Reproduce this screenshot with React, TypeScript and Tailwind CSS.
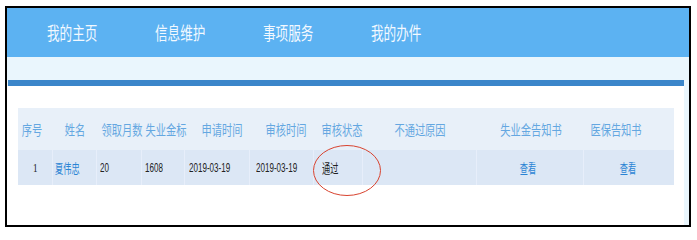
import React from "react";

const cjk = "font-['Noto_Sans_CJK_SC',sans-serif]";

function Sq({ children, className = "" }: { children: React.ReactNode; className?: string }) {
  return <span className={`inline-block whitespace-nowrap ${className}`}>{children}</span>;
}

const navItems = ["我的主页", "信息维护", "事项服务", "我的办件"];

const headers = [
  { text: "序号", cls: "pr-[7px]" },
  { text: "姓名", cls: "" },
  { text: "领取月数", cls: "pl-[4px]" },
  { text: "失业金标", cls: "pl-[4px]" },
  { text: "申请时间", cls: "pl-[8px]" },
  { text: "审核时间", cls: "pl-[8px]" },
  { text: "审核状态", cls: "pl-[6px]" },
  { text: "不通过原因", cls: "" },
  { text: "失业金告知书", cls: "" },
  { text: "医保告知书", cls: "pr-[27px]" },
];

const cell = "h-full flex items-center border-r border-[#e7eefa]";
const num = "origin-left font-['Liberation_Sans',sans-serif] scale-x-[0.62]";

export default function App() {
  return (
    <div className={`w-[697px] h-[232px] bg-white pt-[6px] pl-[5px] ${cjk}`}>
      <div className="w-[686px] h-[221px] border-2 border-black bg-[#eaf6fd] flex flex-col overflow-hidden">
        <nav className="h-[49px] shrink-0 bg-[#5cb2f2] flex items-center pl-[40px]">
          {navItems.map((item) => (
            <div key={item} className="w-[108px] shrink-0">
              <Sq className="text-[18px] text-[#f3f9ff] scale-x-[0.7] origin-left">{item}</Sq>
            </div>
          ))}
        </nav>
        <div className="h-[23px] shrink-0" />
        <div className="flex-1 flex flex-col pr-[5px]">
          <div className="h-[6px] ml-[1px] bg-[#3b86ca] shrink-0" />
          <div className="flex-1 bg-white pl-[11px] pt-[22px]">
            <div className="relative w-[656px]">
              <div className="grid grid-cols-[35px_44px_45px_43px_65px_64px_49px_114px_107px_90px] h-[42px] bg-[#e8f0f9] items-center text-[#64a7e1]">
                {headers.map((h) => (
                  <div key={h.text} className={`flex justify-center ${h.cls}`}>
                    <Sq className="text-[14px] scale-x-[0.73]">{h.text}</Sq>
                  </div>
                ))}
              </div>
              <div className="grid grid-cols-[35px_44px_45px_43px_65px_64px_49px_114px_107px_90px] h-[35px] bg-[#dce7f5] items-center text-[13px] text-[#222]">
                <div className={`${cell} justify-center pl-[1px]`}>
                  <Sq className="scale-x-[0.7] font-['Liberation_Serif',serif]">1</Sq>
                </div>
                <div className={`${cell} pl-[2px]`}>
                  <Sq className="scale-x-[0.63] origin-left text-[#2a84d4]">夏伟忠</Sq>
                </div>
                <div className={`${cell} pl-[3px]`}>
                  <Sq className={num}>20</Sq>
                </div>
                <div className={`${cell} pl-[3px]`}>
                  <Sq className={num}>1608</Sq>
                </div>
                <div className={`${cell} pl-[4px]`}>
                  <Sq className={num}>2019-03-19</Sq>
                </div>
                <div className={`${cell} pl-[6px]`}>
                  <Sq className={num}>2019-03-19</Sq>
                </div>
                <div className={`${cell} pl-[8px]`}>
                  <Sq className="scale-x-[0.63] origin-left">通过</Sq>
                </div>
                <div className="h-full border-r border-[#e7eefa]" />
                <div className={`${cell} justify-center pr-[4px]`}>
                  <Sq className="scale-x-[0.63] text-[#2a84d4]">查看</Sq>
                </div>
                <div className="h-full flex items-center justify-center pr-[2px]">
                  <Sq className="scale-x-[0.63] text-[#2a84d4]">查看</Sq>
                </div>
              </div>
              <svg className="absolute left-[294px] top-[36px] pointer-events-none" width="70" height="54" viewBox="0 0 70 54">
                <ellipse cx="35" cy="26.5" rx="33.5" ry="25" fill="none" stroke="#d8432f" strokeWidth="1" />
              </svg>
            </div>
          </div>
        </div>
      </div>
    </div>
  );
}
